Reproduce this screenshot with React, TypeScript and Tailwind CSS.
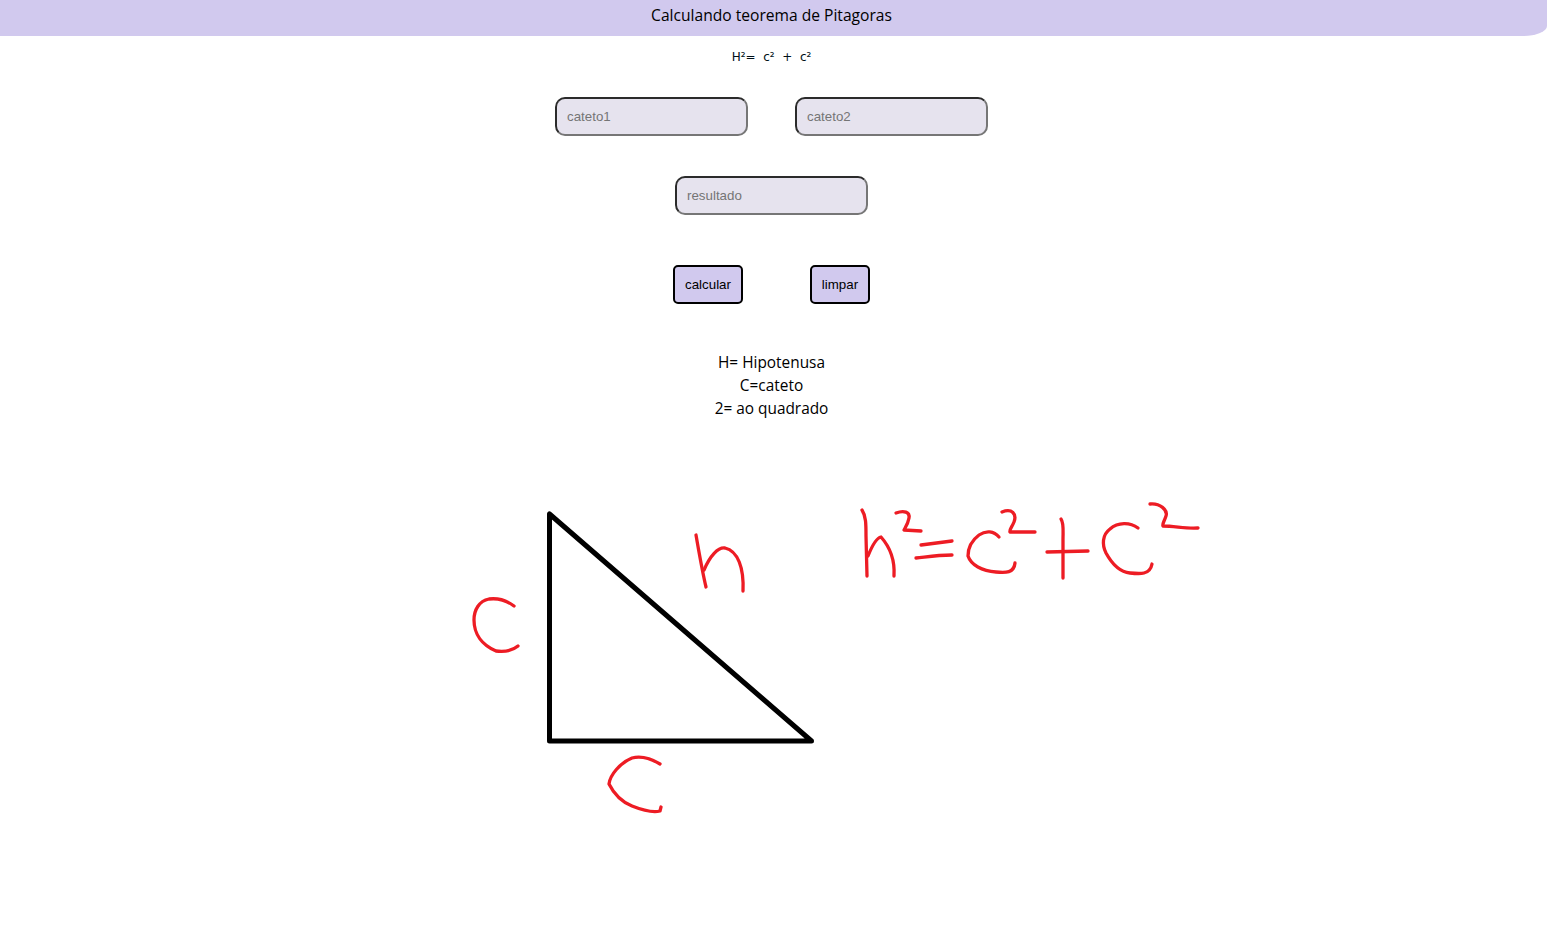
const inputClass =
  "w-[193px] h-[39px] rounded-[10px] border-2 border-t-[#2b2b2b] border-l-[#2b2b2b] border-r-[#767676] border-b-[#767676] bg-[#e6e3ee] px-[10px] text-[13.333px] placeholder:text-[#757575] outline-none font-['Liberation_Sans',sans-serif]";

const buttonClass =
  "h-[39px] rounded-[5px] border-2 border-black bg-[#d1c9ee] text-[13.333px] text-black font-['Liberation_Sans',sans-serif]";

// hand drawn marks, in page coordinates
const redStrokes = [
  // c on the left
  "M514 606 C506 600 497 598 489 599 C479 601 474 610 474 620 C474 634 482 645 496 651 C504 652 512 651 518 646",
  // c under the triangle
  "M660 764 C650 758 640 756 632 758 C620 763 610 775 609 784 C614 794 622 802 632 806 C642 810 652 813 660 811 L661 807",
  // h next to the hypotenuse
  "M696 535 C699 552 702 570 706 587",
  "M704 570 C710 556 718 547 725 548 C738 551 744 568 743 591",
  // h²
  "M862 510 C866 516 866 524 866 536 L867 576",
  "M868 556 C872 546 876 538 881 537 C889 546 895 560 894 576",
  "M896 513 C904 510 910 512 909 518 C908 524 905 528 904 530 L921 531",
  // =
  "M921 545 L952 541",
  "M916 558 C926 557 936 555 952 555",
  // c²
  "M999 537 C994 531 986 530 979 535 C971 541 968 548 968 556 C971 565 982 571 996 572 C1006 573 1014 573 1015 563",
  "M1002 512 C1012 508 1017 514 1014 522 C1012 527 1009 530 1010 532 L1035 532",
  // +
  "M1047 552 L1088 551",
  "M1061 519 C1064 523 1063 530 1063 540 L1063 578",
  // second c²
  "M1138 528 C1130 522 1118 522 1110 529 C1102 535 1102 545 1106 553 C1112 564 1120 572 1130 573 C1140 574 1150 575 1152 564",
  "M1150 504 C1160 503 1168 510 1166 516 C1164 522 1162 524 1163 526 C1175 526 1186 529 1198 528",
];

export default function App() {
  return (
    <div className="min-h-[931px] bg-white overflow-hidden">
      <header className="h-9 bg-[#d1c9ee] rounded-br-[24px_10px] pr-1 pb-[5px] flex items-center justify-center text-black text-[15.6px] font-['Open_Sans',sans-serif]">
        <h1>Calculando teorema de Pitagoras</h1>
      </header>

      <main className="flex flex-col items-center pr-1">
        <p className="mt-[14px] h-[15px] leading-[15px] text-[12px] text-[#001018] whitespace-pre font-['DejaVu_Sans',sans-serif]">
          {"H²=  c²  +  c²"}
        </p>

        <div className="mt-[32px] flex gap-[47px]">
          <input className={inputClass} placeholder="cateto1" />
          <input className={inputClass} placeholder="cateto2" />
        </div>

        <div className="mt-[40px]">
          <input className={inputClass} placeholder="resultado" />
        </div>

        <div className="mt-[50px] flex gap-[67px]">
          <button className={`${buttonClass} w-[70px]`}>calcular</button>
          <button className={`${buttonClass} w-[60px]`}>limpar</button>
        </div>

        <div className="mt-[47px] text-center text-[15.4px] leading-[23px] text-black font-['Open_Sans',sans-serif]">
          <p>H= Hipotenusa</p>
          <p>C=cateto</p>
          <p>2= ao quadrado</p>
        </div>
      </main>

      <svg
        className="mt-[30px] block"
        width="1547"
        height="400"
        viewBox="0 450 1547 400"
        fill="none"
      >
        <path
          d="M549.5 514 L549.5 741 L811.5 741 Z"
          stroke="#000000"
          strokeWidth="5"
          strokeLinejoin="round"
        />
        {redStrokes.map((d) => (
          <path
            key={d}
            d={d}
            stroke="#ed1c24"
            strokeWidth="3.3"
            strokeLinecap="round"
            strokeLinejoin="round"
          />
        ))}
      </svg>
    </div>
  );
}
